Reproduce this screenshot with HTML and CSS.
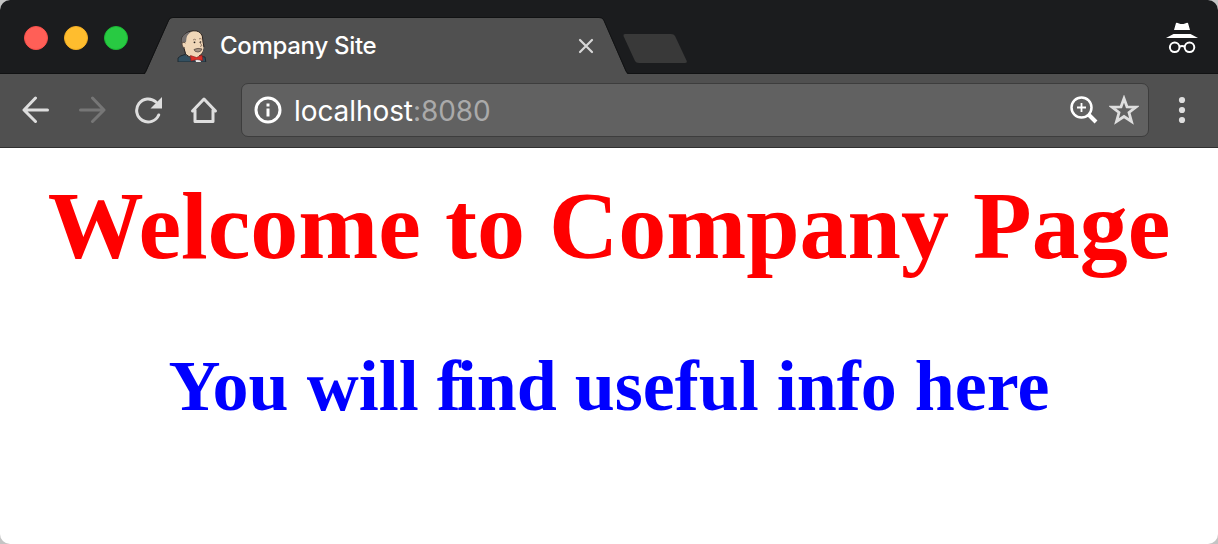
FILE: index.html
```html
<!DOCTYPE html>
<html lang="en">
<head>
<meta charset="utf-8">
<title>Company Site</title>
<link rel="stylesheet" href="styles.css">
</head>
<body>
<div class="window">
  <header class="tabbar">
    <div class="lights">
      <span class="light light-close"></span>
      <span class="light light-min"></span>
      <span class="light light-max"></span>
    </div>
    <div class="tab">
      <svg class="tab-shape" width="486" height="58" viewBox="0 0 486 58">
        <path d="M0 57.500Q1 57 2 55L25 3Q26.500 .5 29 .5H455Q458 .5 459.500 3L482 55Q483 57 485 57.500V58H0Z" fill="#505050"/>
        <path d="M0 56.500Q1 56 2 54L25 2.500Q26.500 .5 29 .5H455Q458 .5 459.500 2.500L482 54Q483 56 485 56.500" fill="none" stroke="#111213"/>
      </svg>
      <svg class="favicon" width="32" height="32" viewBox="0 0 32 32">
        <path d="M2 32V28Q4 25.500 9 24.500L16 28L22 26L29 27L29.800 32Z" fill="#335061" stroke="#202a31"/>
        <path d="M9 19L10 25L17 29L24 27V20Z" fill="#f0d6b7"/>
        <path d="M8 18L9.500 24Q12 27 18 28M23 26Q27 24 27 19" fill="none" stroke="#2b2421"/>
        <path d="M8 17Q8 5 15 1.500Q20 -.3 24 2.500Q27 5 27 10L27.500 18Q27 24 22 26Q15 27 10 22Z" fill="#f0d6b7"/>
        <path d="M5.500 13Q5 7 9 4Q12 1 17 .800Q24 .2 26.300 6L27 12L28 17" fill="none" stroke="#2b2421"/>
        <path d="M5.500 13Q5 7 9 4Q12 1.500 16 1.500Q11 4 10.500 8L10 12H7L6 14Z" fill="#75706f"/>
        <path d="M9.500 13Q6 11 6 14Q6 18 9 18" fill="#f0d6b7" stroke="#4a3b34" stroke-width=".8"/>
        <path d="M17 10Q18.500 8.500 20 10M23 9Q24 8 25.500 9M23.500 12L26 15.500L24 16.500" fill="none" stroke="#7a6555" stroke-width=".8"/>
        <circle cx="18.500" cy="12.300" r=".9" fill="#28221f"/><circle cx="24.500" cy="12" r=".8" fill="#28221f"/>
        <path d="M18 19.500Q22 17.500 26 19Q25 22 22 22Q18.500 22 18 19.500Z" fill="#a69382" stroke="#5a4b42" stroke-width=".8"/>
        <path d="M19 29H24L25 32H20Z" fill="#e8e8e8"/>
        <path d="M14.500 25.500L20.500 27.500L26 25L26.800 30.500L21 29.500L15 31Z" fill="#dc3028" stroke="#811c1b" stroke-width=".6"/>
      </svg>
      <span class="tab-title">Company Site</span>
      <svg class="tab-close" width="16" height="16" viewBox="0 0 16 16"><path d="M2 2L14 14M14 2L2 14" stroke="#d7d7d7" stroke-width="2.200" stroke-linecap="round"/></svg>
    </div>
    <svg class="new-tab" width="66" height="32" viewBox="0 0 66 32"><path d="M3 2H49Q52 2 53 4L64.500 28.500Q65.500 31 63 31H17Q14 31 13 29L1.500 4Q1 2 3 2Z" fill="#393939"/></svg>
    <svg class="incognito" width="34" height="34" viewBox="0 0 34 34">
      <path d="M11 1Q12 .5 14 1.500Q17 2.500 20 1.500Q22 .5 23 1L25 8H9ZM8.500 12H25.500L33 16H1Z" fill="#fff"/>
      <g fill="none" stroke="#fff" stroke-width="2"><circle cx="9.700" cy="25.300" r="4.800"/><circle cx="24.500" cy="25.300" r="4.800"/><path d="M14.500 24.500Q17 23.500 19.700 24.500"/></g>
    </svg>
  </header>
  <nav class="toolbar">
    <svg class="nav-icon" width="28" height="28" viewBox="0 0 28 28"><path d="M13.500 2L2 14L13.500 25.500M2.500 14H25.500" fill="none" stroke="#dedede" stroke-width="3"  stroke-linecap="round" stroke-linejoin="round"/></svg>
    <svg class="nav-icon" width="28" height="28" viewBox="0 0 28 28"><path d="M14.500 2L26 14L14.500 25.500M25.500 14H2.500" fill="none" stroke="#767676" stroke-width="3" stroke-linecap="round" stroke-linejoin="round"/></svg>
    <svg class="nav-icon" width="28" height="28" viewBox="0 0 28 28"><path d="M24.700 19A11.500 11.500 0 1 1 22 6" fill="none" stroke="#dedede" stroke-width="3" stroke-linecap="round"/><path d="M28 1V12.500H16.500Z" fill="#dedede"/></svg>
    <svg class="nav-icon" width="28" height="28" viewBox="0 0 28 28"><path d="M2.500 15L14 3L25.500 15M5 14V25.500H23V14" fill="none" stroke="#dedede" stroke-width="3" stroke-linecap="round" stroke-linejoin="round"/></svg>
    <div class="address">
      <svg width="28" height="28" viewBox="0 0 28 28"><circle cx="14" cy="14" r="12" fill="none" stroke="#fff" stroke-width="3"/><path d="M12.500 7.500H15.500V10.500H12.500ZM12.500 12.500H15.500V20.500H12.500Z" fill="#fff"/></svg>
      <span class="url">localhost<span class="port">:8080</span></span>
      <svg class="magnifier" width="28" height="28" viewBox="0 0 28 28"><circle cx="11.500" cy="11.500" r="10" fill="none" stroke="#fff" stroke-width="2.500"/><path d="M7 11.500H16M11.500 7V16" stroke="#fff" stroke-width="1.800"/><path d="M19 19L26 26" stroke="#fff" stroke-width="4"/></svg>
      <svg class="star" width="30" height="30" viewBox="0 0 30 30"><path d="M15 3.500L18 11.800L27 12L20 17.500L22.500 26.500L15 21.500L7.500 26.500L10 17.500L3 12L12 11.800Z" fill="none" stroke="#dedede" stroke-width="2.800"/></svg>
    </div>
    <svg class="menu" width="8" height="28" viewBox="0 0 8 28"><g fill="#dedede"><circle cx="4" cy="4" r="3.100"/><circle cx="4" cy="14" r="3.100"/><circle cx="4" cy="24" r="3.100"/></g></svg>
  </nav>
  <main class="page">
    <h1>Welcome to Company Page</h1>
    <h2>You will <span class="tight">f</span>ind useful info here</h2>
  </main>
</div>
</body>
</html>
```

FILE: styles.css
```css
* { box-sizing: border-box; }
html { background: #c4c4c4; }
body { margin: 0; }
svg { display: block; flex: none; }
.window {
  width: 1218px;
  height: 544px;
  overflow: hidden;
  border-radius: 10px;
  background: #fff;
}
.tabbar {
  display: flex;
  height: 74px;
  background: #1b1c1e;
  box-shadow: inset 0 -1px #111213;
}
.lights { display: flex; gap: 16px; width: 144px; padding: 26px 0 0 24px; }
.light { width: 24px; height: 24px; border-radius: 50%; }
.light-close { background: #ff5f57; border: 1px solid #f9504b; }
.light-min { background: #ffbd2e; border: 1px solid #f3ad24; }
.light-max { background: #28ca42; border: 1px solid #1bb834; }
.tab {
  position: relative;
  display: flex;
  align-items: center;
  width: 486px;
  height: 58px;
  margin-top: 17px;
  padding: 0 36px 0 32px;
}
.tab-shape { position: absolute; inset: 0; }
.favicon, .tab-title, .tab-close { position: relative; }
.tab-title {
  flex: 1;
  margin-left: 12px;
  color: #fff;
  font: 500 24px/30px Inter, sans-serif;
  letter-spacing: -.3px;
}
.new-tab { margin: 32px 0 0 -8px; }
.incognito { margin: 22px 19px 0 auto; }
.toolbar {
  display: flex;
  align-items: center;
  height: 74px;
  padding: 0 32px 2px 22px;
  background: #505050;
  border-bottom: 1px solid #303030;
}
.nav-icon { margin-right: 28px; }
.address {
  display: flex;
  align-items: center;
  width: 908px;
  height: 54px;
  margin-left: -5px;
  padding: 0 9px 0 12px;
  background: #616161;
  border: 1px solid #3d3d3d;
  border-radius: 7px;
}
.url {
  flex: 1;
  margin-left: 12px;
  padding-top: 2px;
  color: #fff;
  font: 400 28px/34px Inter, sans-serif;
  letter-spacing: -.08px;
}
.port { color: #aaa; }
.star { margin-left: 11px; }
.menu { margin-left: auto; }
.page {
  padding-top: 22px;
  text-align: center;
  font-family: "Liberation Serif", "Times New Roman", serif;
}
h1 { margin: 0; color: #f00; font-size: 96px; line-height: 112px; white-space: nowrap; }
h2 { margin: 63px 0 0; color: #00f; font-size: 72px; line-height: 82px; }
.tight { letter-spacing: -4px; }
```
